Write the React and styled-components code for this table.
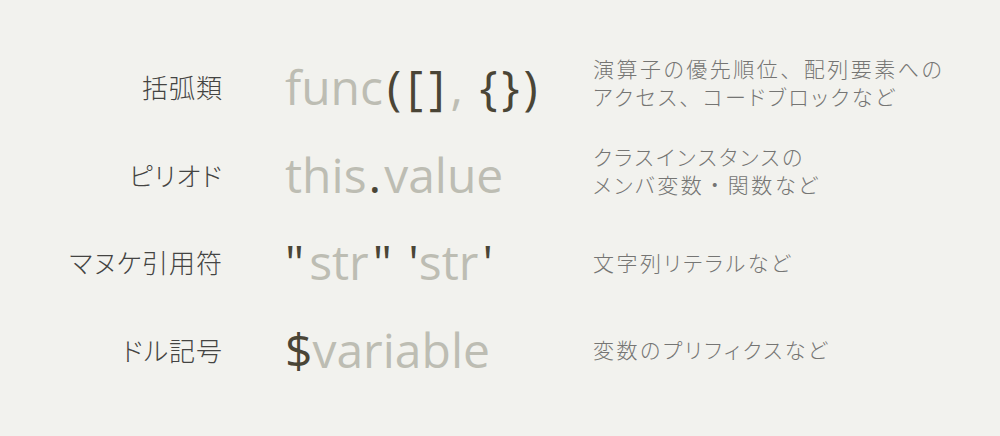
import React from 'react';
import styled, { createGlobalStyle } from 'styled-components';

const GlobalStyle = createGlobalStyle`
  html, body {
    margin: 0;
    padding: 0;
    background: #f2f2ee;
  }
`;

const Page = styled.div`
  width: 1000px;
  height: 436px;
  box-sizing: border-box;
  padding-top: 43px;
  background: #f2f2ee;
  display: grid;
  grid-template-columns: 222px 308px 1fr;
  grid-auto-rows: 87.5px;
  font-family: "Noto Sans CJK JP", "Noto Sans", sans-serif;
`;

const Label = styled.div`
  display: flex;
  align-items: center;
  justify-content: flex-end;
  font-size: 26px;
  font-weight: 300;
  letter-spacing: 1px;
  font-feature-settings: "palt";
  margin-right: -1px;
  color: #444442;
  white-space: nowrap;
`;

const Code = styled.div`
  display: flex;
  align-items: center;
  padding-left: 63px;
  font-family: "Open Sans", "Noto Sans", sans-serif;
  font-size: 48px;
  color: #bdbdb3;
  white-space: pre;
`;

const Mark = styled.span`
  color: ${(p) => (p.$dim ? '#bdbdb3' : '#4a4536')};
  letter-spacing: ${(p) => (p.$dim ? 0 : p.$ls ?? 6)}px;
  margin-left: ${(p) => p.$ml || 0}px;
`;

const Desc = styled.div`
  display: flex;
  align-items: center;
  padding-left: 63px;
  font-size: 21px;
  font-weight: 300;
  line-height: 28px;
  letter-spacing: 2.5px;
  font-feature-settings: "palt";
  color: #757573;
  margin-top: ${(p) => p.$shift || 0}px;
`;

// 句読点だけは全角幅のまま
const Punct = styled.span`
  font-feature-settings: normal;
`;

const withPunct = (text) =>
  text.split(/([、・])/).map((part, i) =>
    part === '、' || part === '・' ? <Punct key={i}>{part}</Punct> : part
  );

const rows = [
  {
    label: '括弧類',
    code: [['func', true], ['([]', false, 6, 4], [',', true], [' {})', false, 4]],
    desc: ['演算子の優先順位、配列要素への', 'アクセス、コードブロックなど'],
    shift: -9,
  },
  {
    label: 'ピリオド',
    code: [['this', true], ['.', false, 3, 2], ['value', true]],
    desc: ['クラスインスタンスの', 'メンバ変数・関数など'],
    shift: -9,
  },
  {
    label: 'マヌケ引用符',
    code: [['"', false, 5], ['str', true], ['"', false, 4, 4], [' ', true], ["'", false, 0, 0], ['str', true], ["'", false, 0, 4]],
    desc: ['文字列リテラルなど'],
    shift: 0,
  },
  {
    label: 'ドル記号',
    code: [['$', false, 0], ['variable', true]],
    desc: ['変数のプリフィクスなど'],
    shift: 0,
  },
];

export default function App() {
  return (
    <>
      <GlobalStyle />
      <Page>
        {rows.map((r) => (
          <React.Fragment key={r.label}>
            <Label>{r.label}</Label>
            <Code>
              {r.code.map(([t, dim, ls, ml], i) => (
                <Mark key={i} $dim={dim} $ls={ls} $ml={ml}>{t}</Mark>
              ))}
            </Code>
            <Desc $shift={r.shift}>
              <div>
                {r.desc.map((d) => (
                  <div key={d}>{withPunct(d)}</div>
                ))}
              </div>
            </Desc>
          </React.Fragment>
        ))}
      </Page>
    </>
  );
}
